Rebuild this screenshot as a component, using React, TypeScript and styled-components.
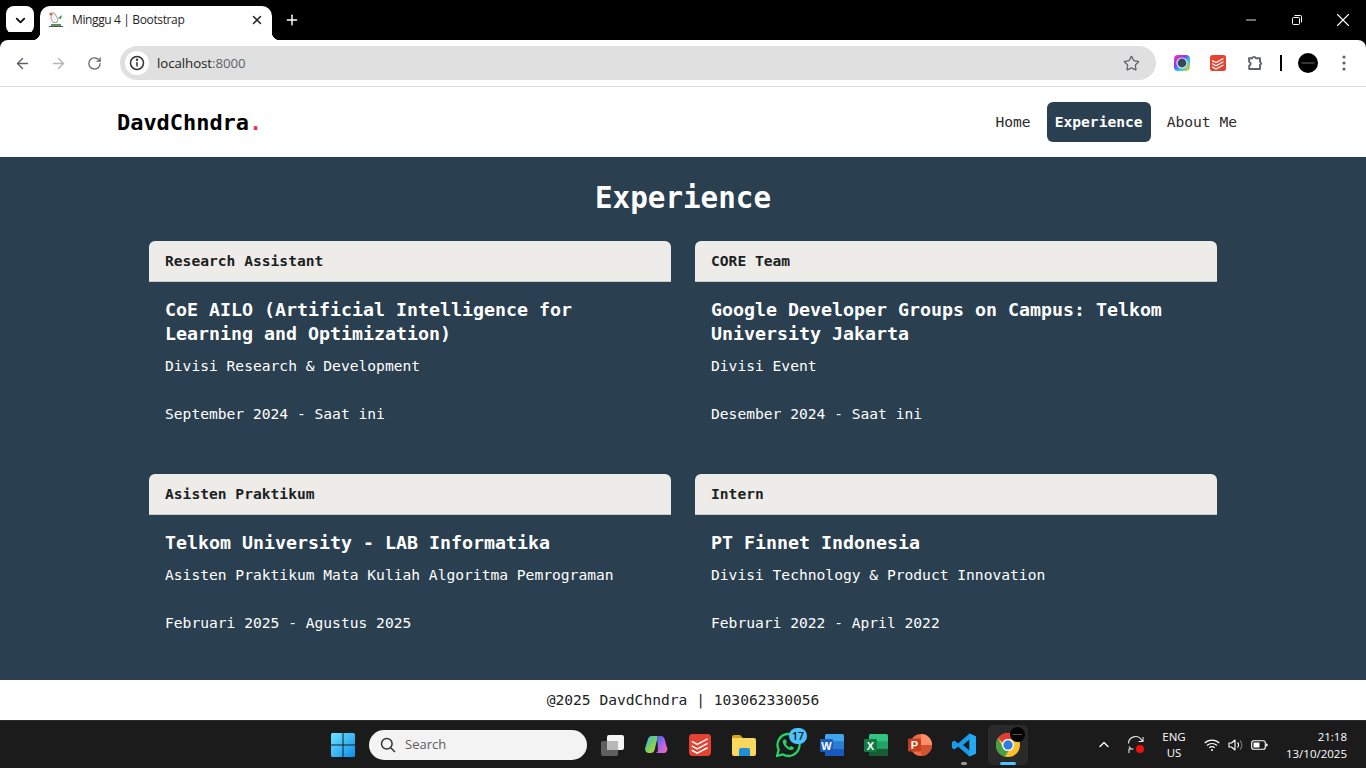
import React from "react";
import styled, { createGlobalStyle } from "styled-components";
import { ArrowLeft, ArrowRight, RotateCw, Star, X, Plus, ChevronDown, ChevronUp, Minus } from "lucide-react";

const mono = `"DejaVu Sans Mono", "Liberation Mono", monospace`;
const ui = `"Open Sans", "Noto Sans", "Liberation Sans", sans-serif`;
const navy = "#2a3f50";

const Global = createGlobalStyle`
  html, body { margin: 0; padding: 0; height: 100%; overflow: hidden; background: #fff; }
  * { box-sizing: border-box; }
`;

const Page = styled.div`display: flex; flex-direction: column; height: 100vh; font-family: ${mono};`;

const TabStrip = styled.div`display: flex; align-items: flex-end; height: 40px; background: #000; padding-left: 6px; flex: none;`;
const TabSwitcher = styled.div`width: 28px; height: 28px; margin-bottom: 6px; background: #fff; border-radius: 8px; display: flex; align-items: center; justify-content: center; color: #111;`;
const Tab = styled.div`
  position: relative; width: 232px; height: 34px; margin-left: 6px; padding: 0 8px 6px; background: #fff;
  border-radius: 10px 10px 0 0; display: flex; align-items: center; color: #1f1f1f;
  &::before, &::after { content: ""; position: absolute; bottom: 0; width: 8px; height: 8px; }
  &::before { left: -8px; background: radial-gradient(circle at 0 0, #000 8px, #fff 8.5px); }
  &::after { right: -8px; background: radial-gradient(circle at 100% 0, #000 8px, #fff 8.5px); }
`;
const TabTitle = styled.span`font: 12px/16px ${ui}; margin-left: 8px; flex: 1; letter-spacing: -0.37px;`;
const NewTab = styled.div`width: 28px; height: 28px; margin: 0 0 6px 6px; color: #fff; display: flex; align-items: center; justify-content: center;`;
const WindowButtons = styled.div`margin-left: auto; display: flex; height: 40px; align-self: flex-start;`;
const WindowButton = styled.div`width: 46px; display: flex; align-items: center; justify-content: center; color: #fff;`;

const Toolbar = styled.div`display: flex; align-items: center; height: 47px; padding-left: 4px; background: #fff; border-radius: 8px 8px 0 0; border-bottom: 1px solid #dcdcdc; flex: none; margin-top: 0; box-shadow: 0 -8px 0 #000;`;
const ToolButton = styled.div<{ $color?: string }>`width: 36px; height: 34px; display: flex; align-items: center; justify-content: center; color: ${p => p.$color || "#5f6368"}; flex: none;`;
const Address = styled.div`display: flex; align-items: center; width: 1036px; height: 34px; margin: 0 8px; padding: 0 16px 0 5px; background: #e0e0e0; border-radius: 17px; flex: none;`;
const InfoChip = styled.div`width: 24px; height: 24px; border-radius: 50%; background: #fff; display: flex; align-items: center; justify-content: center; flex: none;`;
const UrlText = styled.span`font: 13.3px/18px ${ui}; margin-left: 8px; flex: 1; color: #1f1f1f; letter-spacing: -0.08px;`;
const UrlPort = styled.span`color: #5f6368;`;
const Separator = styled.div`width: 2px; height: 16px; background: #000; margin: 0 8px 0 7px; flex: none;`;
const ExtGap = styled.div`width: 1px; flex: none;`;

const NavBar = styled.nav`display: flex; align-items: center; justify-content: space-between; height: 70px; padding: 0 121px 0 117px; background: #fff; flex: none;`;
const Logo = styled.div`font-size: 21.93px; font-weight: 700; color: #000; line-height: 30px; padding-top: 2px;`;
const LogoDot = styled.span`color: #e8384f;`;
const NavLinks = styled.div`display: flex; gap: 8px;`;
const NavLink = styled.a<{ $active?: boolean }>`
  display: block; height: 40px; padding: 0 8px; border-radius: 6px; font-size: 14.62px; line-height: 40px;
  font-weight: ${p => (p.$active ? 700 : 400)}; color: ${p => (p.$active ? "#fff" : "#2b2b2b")};
  background: ${p => (p.$active ? navy : "transparent")};
`;

const Main = styled.main`flex: 1; min-height: 0; background: ${navy}; padding-top: 21px;`;
const Heading = styled.h1`margin: 0 0 23px; text-align: center; font-size: 29.24px; font-weight: 700; line-height: 40px; color: #fff;`;
const CardGrid = styled.div`display: grid; grid-template-columns: 1fr 1fr; gap: 24px; width: 1068px; margin: 0 auto;`;
const Card = styled.article`border-radius: 6px; color: #fff;`;
const CardHeader = styled.header`height: 41px; padding: 0 16px; border-radius: 6px 6px 0 0; background: #eeece9; border-bottom: 1px solid #c9c9c7; color: #1c1f23; font-size: 14.62px; font-weight: 700; line-height: 40px;`;
const CardBody = styled.div`padding: 16px 16px 24px;`;
const CardTitle = styled.h2`margin: 0 0 8px; font-size: 18.27px; font-weight: 700; line-height: 24px;`;
const Division = styled.p`margin: 0 0 24px; font-size: 14.62px; line-height: 24px;`;
const Period = styled.p`margin: 0; font-size: 14.62px; line-height: 24px;`;

const Footer = styled.footer`height: 40px; background: #fff; text-align: center; font-size: 14.62px; line-height: 40px; color: #222; flex: none;`;

const Taskbar = styled.div`position: relative; display: flex; align-items: center; height: 48px; padding-left: 321px; background: #1b1b1b; border-top: 1px solid #2c2c2c; flex: none;`;
const TaskSlot = styled.div<{ $active?: boolean; $mark?: string }>`
  position: relative; width: 44px; height: 40px; display: flex; align-items: center; justify-content: center; flex: none;
  border-radius: 5px; background: ${p => (p.$active ? "#2a2a2a" : "transparent")};
  ${p => p.$active && "width: 40px; margin: 0 2px;"}
  &::after {
    content: ""; position: absolute; bottom: 0; left: 50%; transform: translateX(-50%); border-radius: 2px; height: 3px;
    width: ${p => (p.$mark === "on" ? "16px" : p.$mark === "off" ? "6px" : "0")};
    background: ${p => (p.$mark === "on" ? "#4cc2ff" : "#9a9a9a")};
  }
`;
const SearchBox = styled.div`display: flex; align-items: center; width: 218px; height: 30px; margin: 0 3px 0 4px; padding: 0 0 0 11px; background: #f3f3f3; border-radius: 15px; font: 13px/16px ${ui}; color: #5d5d5d; flex: none;`;
const SearchLabel = styled.span`margin: 0 0 2px 9px;`;
const Badge = styled.span`position: absolute; top: 3px; right: 3px; width: 18px; height: 16px; border-radius: 8px; background: #4cc2ff; color: #111; font: 600 10.5px/16px ${ui}; text-align: center;`;
const Tray = styled.div`margin-left: auto; display: flex; align-items: center; height: 48px; color: #fff; padding-right: 19px;`;
const TrayText = styled.div`font: 11.5px/16px ${ui}; text-align: center; color: #fff; width: 28px; margin: 0 16px 0 14px;`;
const TrayIcon = styled.div<{ $w: number; $gap?: number }>`width: ${p => p.$w}px; margin-left: ${p => p.$gap || 0}px; display: flex; justify-content: center; flex: none;`;
const Clock = styled.div`font: 11.5px/17px ${ui}; text-align: right; color: #fff; margin-left: 11px; width: 68px;`;

const Info = () => (
  <svg width="16" height="16" viewBox="0 0 16 16" fill="none" stroke="#333" strokeWidth="1.5">
    <circle cx="8" cy="8" r="6.5" /><path d="M8 7v4.5" /><circle cx="8" cy="4.8" r=".5" fill="#333" />
  </svg>
);
const Favicon = () => (
  <svg width="16" height="18" viewBox="0 0 16 18">
    <path d="M3 3l1.5-1.5L7 3l3 5 -1 3.5H5L3 8z" fill="#f4f4f0" stroke="#8a8a80" strokeWidth=".8" />
    <circle cx="3" cy="3" r="1.6" fill="#d86c45" />
    <path d="M10 7l4-3-1 4z" fill="#2f9a45" />
    <path d="M3 13h10v2H3z" fill="#5e8f5a" /><path d="M1 15.5h14" stroke="#555" />
  </svg>
);
const Restore = () => (
  <svg width="10" height="10" viewBox="0 0 10 10" fill="none" stroke="#fff" strokeWidth="1">
    <rect x=".5" y="2.5" width="7" height="7" rx="1" /><path d="M2.5.5h6a1 1 0 0 1 1 1v6" />
  </svg>
);
const ColorExt = () => (
  <svg width="16" height="16" viewBox="0 0 16 16">
    <defs><linearGradient id="ce" x1="0" y1="0" x2="1" y2="1"><stop offset="0" stopColor="#ff2fb0" /><stop offset=".4" stopColor="#8a3cf0" /><stop offset=".6" stopColor="#19c6f0" /><stop offset="1" stopColor="#ffd21f" /></linearGradient></defs>
    <rect width="16" height="16" rx="4" fill="url(#ce)" /><circle cx="8" cy="8" r="5.6" fill="#dfe4ea" /><circle cx="8" cy="8" r="4.4" fill="#34495e" />
  </svg>
);
const TodoistGlyph = ({ s = 16 }: { s?: number }) => (
  <svg width={s} height={s} viewBox="0 0 16 16">
    <rect width="16" height="16" rx="2.5" fill="#e44332" />
    <path d="M2 5.4l4 2.2 7.5-4M2 8.6l4 2.2 7.5-4M2 11.8l4 2.2 7.5-4" fill="none" stroke="#fff" strokeWidth="1.1" />
  </svg>
);
const PuzzleExt = () => (
  <svg width="18" height="18" viewBox="0 0 18 18" fill="none" stroke="#5f6368" strokeWidth="1.9" strokeLinejoin="round">
    <path d="M3 4.2h3.2a1.9 1.9 0 0 1 3.6 0H14v3.6a1.6 1.6 0 0 1 0 3V15H3.2v-3.4a1.9 1.9 0 0 0 0-3.7z" />
  </svg>
);
const Avatar = ({ s }: { s: number }) => (
  <svg width={s} height={s} viewBox="0 0 20 20">
    <circle cx="10" cy="10" r="10" fill="#000" /><rect x="3.500" y="9.500" width="13" height="1" fill="#6e6e6e" />
  </svg>
);
const WinLogo = () => (
  <svg width="24" height="24" viewBox="0 0 24 24">
    <defs><linearGradient id="wl" x1="0" y1="0" x2="1" y2="1"><stop offset="0" stopColor="#6fe3ff" /><stop offset="1" stopColor="#0a8fe8" /></linearGradient></defs>
    <path d="M0 1.5A1.5 1.5 0 0 1 1.5 0h10v11.5H0zM12.500 0h10A1.5 1.5 0 0 1 24 1.500v10H12.500zM0 12.500h11.500V24h-10A1.500 1.500 0 0 1 0 22.500zM12.500 12.500H24v10a1.500 1.500 0 0 1-1.500 1.500h-10z" fill="url(#wl)" />
  </svg>
);
const SearchGlyph = () => (
  <svg width="16" height="16" viewBox="0 0 16 16" fill="none" stroke="#333" strokeWidth="1.5"><circle cx="6.800" cy="6.800" r="5.300" /><path d="M10.700 10.700L15 15" /></svg>
);
const TaskView = () => (
  <svg width="24" height="24" viewBox="0 0 24 24">
    <rect x="1" y="8" width="17" height="15" rx="2" fill="#5f5f5f" />
    <rect x="7" y="2" width="17" height="15" rx="2" fill="#f4f4f4" />
    <rect x="7" y="8" width="11" height="9" fill="#b8b8b8" />
  </svg>
);
const Copilot = () => (
  <svg width="24" height="24" viewBox="0 0 24 24">
    <defs>
      <linearGradient id="c1" x1="0" y1="0" x2="1" y2="1"><stop offset="0" stopColor="#2fb7f5" /><stop offset=".55" stopColor="#7dd05a" /><stop offset="1" stopColor="#f6c431" /></linearGradient>
      <linearGradient id="c2" x1="0" y1="0" x2="1" y2="1"><stop offset="0" stopColor="#2a6ff0" /><stop offset=".6" stopColor="#c060e8" /><stop offset="1" stopColor="#f2709c" /></linearGradient>
    </defs>
    <path d="M7 3h7l-3.500 14a4 4 0 0 1-3.800 3H5a4 4 0 0 1-3.800-5L4 6a4 4 0 0 1 3-3z" fill="url(#c1)" />
    <path d="M13 3h4a4 4 0 0 1 3.600 3l2.200 8a4 4 0 0 1-3.800 6h-7.500a3 3 0 0 0 2.500-3z" fill="url(#c2)" />
  </svg>
);
const Folder = () => (
  <svg width="24" height="22" viewBox="0 0 24 22">
    <path d="M0 3a2 2 0 0 1 2-2h6l3 3h-11z" fill="#d9a21b" />
    <path d="M0 4h22a2 2 0 0 1 2 2v14a2 2 0 0 1-2 2H2a2 2 0 0 1-2-2z" fill="#f9d65c" />
    <path d="M7 16a2 2 0 0 1 2-2h7a2 2 0 0 1 2 2v6H7z" fill="#1d8fd8" />
  </svg>
);
const WhatsApp = () => (
  <svg width="26" height="26" viewBox="0 0 26 26" fill="none">
    <path d="M2 24l1.700-6.200A11 11 0 1 1 8 22.400z" stroke="#25d366" strokeWidth="2.300" strokeLinejoin="round" />
    <path d="M9 7.500c-1.500 1-1.800 3 0 5.800 2 3 4.800 4.800 7 4.800 1.800 0 3-1.300 2.800-2.600l-3-1.500-1.300 1.400c-1.500-.6-3-2-3.700-3.600l1.200-1.300-1.300-3z" fill="#25d366" />
  </svg>
);
const OfficeIcon = ({ letter, tile, bars }: { letter: string; tile: string; bars: string[] }) => (
  <svg width="24" height="22" viewBox="0 0 24 22">
    <rect x="5" y="0" width="19" height="22" rx="1.500" fill={bars[0]} />
    <rect x="5" y="7.300" width="19" height="7.400" fill={bars[1]} />
    <rect x="5" y="14.700" width="19" height="7.300" rx="1" fill={bars[2]} />
    <rect x="0" y="5" width="13" height="13" rx="1.200" fill={tile} />
    <text x="6.500" y="15.500" textAnchor="middle" fontFamily="Liberation Sans, sans-serif" fontSize="11" fontWeight="700" fill="#fff">{letter}</text>
  </svg>
);
const PowerPoint = () => (
  <svg width="24" height="22" viewBox="0 0 24 22">
    <circle cx="13" cy="11" r="11" fill="#ed6c47" /><path d="M13 0a11 11 0 0 1 11 11H13z" fill="#ff8f6b" /><path d="M13 11h11a11 11 0 0 1-11 11z" fill="#d35230" />
    <rect x="0" y="4.500" width="13" height="13" rx="1.200" fill="#c43e1c" />
    <text x="6.500" y="15" textAnchor="middle" fontFamily="Liberation Sans, sans-serif" fontSize="11" fontWeight="700" fill="#fff">P</text>
  </svg>
);
const VSCode = () => (
  <svg width="24" height="24" viewBox="0 0 24 24">
    <path d="M17.500 0.500L24 3.500v17l-6.500 3L6 13.500l-3.500 3L0 15V9l2.500-1.500L6 10.500zM17.500 6.500L11 12l6.500 5.500z" fill="#1a9be8" fillRule="evenodd" />
    <path d="M17.500 0.500L24 3.500v17l-6.500 3z" fill="#23aaf2" />
  </svg>
);
const ChromeIcon = () => (
  <svg width="24" height="24" viewBox="0 0 24 24">
    <circle cx="12" cy="12" r="12" fill="#fbc02d" />
    <path d="M12 0a12 12 0 0 1 10.400 6H12a6 6 0 0 0-5.500 3.500L2.100 5.200A12 12 0 0 1 12 0z" fill="#e53935" />
    <path d="M2.100 5.200l4.900 9.600a6 6 0 0 0 5.500 3.200L9 23.600A12 12 0 0 1 2.100 5.200z" fill="#43a047" />
    <circle cx="12" cy="12" r="6" fill="#fff" /><circle cx="12" cy="12" r="4.700" fill="#2f7de1" />
  </svg>
);
const AvatarBadge = styled.div`position: absolute; top: 2px; right: 3px; display: flex;`;
const SyncIcon = () => (
  <svg width="20" height="20" viewBox="0 0 20 20" fill="none" stroke="#e8e8e8" strokeWidth="1.100">
    <path d="M2.500 8.500A7 7 0 0 1 15.500 5l1.500 1.500M17 2v4.500h-4.500M3 11.500l2.500 3M3 18v-4h4.500" />
    <circle cx="14" cy="14" r="4" fill="#f01010" stroke="none" />
  </svg>
);
const WifiIcon = () => (
  <svg width="16" height="14" viewBox="0 0 16 14" fill="none" stroke="#fff" strokeWidth="1.200">
    <path d="M.7 5a10.500 10.500 0 0 1 14.600 0M3 7.500a7.200 7.200 0 0 1 10 0M5.300 9.800a3.800 3.800 0 0 1 5.400 0" /><circle cx="8" cy="12" r="1" fill="#fff" stroke="none" />
  </svg>
);
const VolumeIcon = () => (
  <svg width="16" height="14" viewBox="0 0 16 14" fill="none" stroke="#fff" strokeWidth="1.100">
    <path d="M1 5h2.500L7 2v10L3.500 9H1z" strokeLinejoin="round" /><path d="M9.500 4.500a3.500 3.500 0 0 1 0 5" /><path d="M12 2.500a6.500 6.500 0 0 1 0 9" stroke="#777" />
  </svg>
);
const BatteryIcon = () => (
  <svg width="17" height="12" viewBox="0 0 17 12" fill="none">
    <rect x=".7" y="1.700" width="13.600" height="8.600" rx="2" stroke="#fff" strokeWidth="1.100" />
    <rect x="2.500" y="3.500" width="6" height="5" fill="#fff" /><rect x="15" y="4.500" width="1.500" height="3" rx=".7" fill="#fff" />
  </svg>
);

const jobs = [
  { role: "Research Assistant", title: "CoE AILO (Artificial Intelligence for Learning and Optimization)", div: "Divisi Research & Development", period: "September 2024 - Saat ini" },
  { role: "CORE Team", title: "Google Developer Groups on Campus: Telkom University Jakarta", div: "Divisi Event", period: "Desember 2024 - Saat ini" },
  { role: "Asisten Praktikum", title: "Telkom University - LAB Informatika", div: "Asisten Praktikum Mata Kuliah Algoritma Pemrograman", period: "Februari 2025 - Agustus 2025" },
  { role: "Intern", title: "PT Finnet Indonesia", div: "Divisi Technology & Product Innovation", period: "Februari 2022 - April 2022" },
];

export default function App() {
  return (
    <Page>
      <Global />
      <TabStrip>
        <TabSwitcher><ChevronDown size={15} strokeWidth={3} /></TabSwitcher>
        <Tab>
          <Favicon />
          <TabTitle>Minggu 4 | Bootstrap</TabTitle>
          <X size={14} strokeWidth={2.5} />
        </Tab>
        <NewTab><Plus size={16} strokeWidth={2.2} /></NewTab>
        <WindowButtons>
          <WindowButton><Minus size={16} strokeWidth={1.3} /></WindowButton>
          <WindowButton><Restore /></WindowButton>
          <WindowButton><X size={22} strokeWidth={1.2} /></WindowButton>
        </WindowButtons>
      </TabStrip>
      <Toolbar>
        <ToolButton><ArrowLeft size={17} strokeWidth={2} /></ToolButton>
        <ToolButton $color="#b4b6b8"><ArrowRight size={17} strokeWidth={2} /></ToolButton>
        <ToolButton><RotateCw size={15} strokeWidth={2} /></ToolButton>
        <Address>
          <InfoChip><Info /></InfoChip>
          <UrlText>localhost<UrlPort>:8000</UrlPort></UrlText>
          <Star size={17} strokeWidth={1.8} color="#5f6368" />
        </Address>
        <ToolButton><ColorExt /></ToolButton>
        <ToolButton><TodoistGlyph /></ToolButton>
        <ExtGap />
        <ToolButton><PuzzleExt /></ToolButton>
        <Separator />
        <ToolButton><Avatar s={20} /></ToolButton>
        <ToolButton>
          <svg width="4" height="16" viewBox="0 0 4 16" fill="#5f6368"><circle cx="2" cy="2" r="1.600" /><circle cx="2" cy="8" r="1.600" /><circle cx="2" cy="14" r="1.600" /></svg>
        </ToolButton>
      </Toolbar>
      <NavBar>
        <Logo>DavdChndra<LogoDot>.</LogoDot></Logo>
        <NavLinks>
          <NavLink>Home</NavLink>
          <NavLink $active>Experience</NavLink>
          <NavLink>About Me</NavLink>
        </NavLinks>
      </NavBar>
      <Main>
        <Heading>Experience</Heading>
        <CardGrid>
          {jobs.map(j => (
            <Card key={j.role}>
              <CardHeader>{j.role}</CardHeader>
              <CardBody>
                <CardTitle>{j.title}</CardTitle>
                <Division>{j.div}</Division>
                <Period>{j.period}</Period>
              </CardBody>
            </Card>
          ))}
        </CardGrid>
      </Main>
      <Footer>@2025 DavdChndra | 103062330056</Footer>
      <Taskbar>
        <TaskSlot><WinLogo /></TaskSlot>
        <SearchBox><SearchGlyph /><SearchLabel>Search</SearchLabel></SearchBox>
        <TaskSlot><TaskView /></TaskSlot>
        <TaskSlot><Copilot /></TaskSlot>
        <TaskSlot><TodoistGlyph s={22} /></TaskSlot>
        <TaskSlot><Folder /></TaskSlot>
        <TaskSlot><WhatsApp /><Badge>17</Badge></TaskSlot>
        <TaskSlot><OfficeIcon letter="W" tile="#1a5cb8" bars={["#41a5ee", "#2b7cd3", "#185abd"]} /></TaskSlot>
        <TaskSlot><OfficeIcon letter="X" tile="#107c41" bars={["#33c481", "#21a366", "#185c37"]} /></TaskSlot>
        <TaskSlot><PowerPoint /></TaskSlot>
        <TaskSlot $mark="off"><VSCode /></TaskSlot>
        <TaskSlot $active $mark="on"><ChromeIcon /><AvatarBadge><Avatar s={15} /></AvatarBadge></TaskSlot>
        <Tray>
          <TrayIcon $w={16}><ChevronUp size={17} strokeWidth={2} /></TrayIcon>
          <TrayIcon $w={20} $gap={14}><SyncIcon /></TrayIcon>
          <TrayText>ENG<br />US</TrayText>
          <TrayIcon $w={16}><WifiIcon /></TrayIcon>
          <TrayIcon $w={16} $gap={8}><VolumeIcon /></TrayIcon>
          <TrayIcon $w={17} $gap={7}><BatteryIcon /></TrayIcon>
          <Clock>21:18<br />13/10/2025</Clock>
        </Tray>
      </Taskbar>
    </Page>
  );
}
